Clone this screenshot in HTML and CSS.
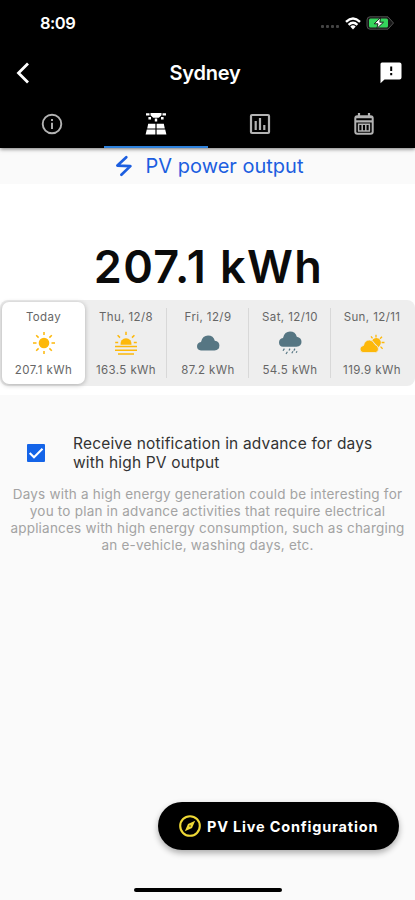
FILE: index.html
```html
<!DOCTYPE html>
<html lang="en">
<head>
<meta charset="utf-8">
<title>Sydney</title>
<link rel="stylesheet" href="styles.css">
</head>
<body>
<div class="screen">
  <header class="header">
    <div class="status">
      <span class="time">8:09</span>
      <div class="indicators">
        <span class="signal"><i></i><i></i><i></i><i></i></span>
        <svg class="wifi" width="16" height="13" viewBox="0 0 16 13" fill="none" stroke="#fff" stroke-width="2.4"><path d="M1 4.8Q8-1.6 15 4.8M3.6 7.8Q8 3.8 12.4 7.8"/><path d="M5.3 9.5Q8 7.2 10.7 9.5L8 12.4Z" fill="#fff" stroke="none"/></svg>
        <svg width="29" height="14" viewBox="0 0 29 14"><path d="M4 .8H22L27.5 7 22 13.2H4Q1 13.2 1 10V4Q1 .8 4 .8Z" fill="#171717" stroke="#505050"/><rect x="3" y="2.5" width="19" height="9" rx="1.5" fill="#35d45c"/><path d="M14.6 1.5 8.2 7.8H12L10.8 12.5 17.5 6.2H13.8Z" fill="#fff" stroke="#111" stroke-width=".9"/></svg>
      </div>
    </div>
    <div class="bar">
      <svg class="back" width="14" height="22" viewBox="0 0 14 22" fill="none" stroke="#fff" stroke-width="2.8"><path d="M12 1.5 2.5 11 12 20.5"/></svg>
      <h1>Sydney</h1>
      <svg class="feedback" width="22" height="22" viewBox="0 0 22 22"><path d="M2 .5H19.5Q21.5.5 21.5 2.5V15.5Q21.5 17.5 19.5 17.5H4.5L.5 21.3V2Q.5.5 2 .5Z" fill="#fff"/><path d="M11.2 4.5V9M11.2 11V13.2" stroke="#000" stroke-width="2"/></svg>
    </div>
    <nav class="tabs">
      <div class="tab">
        <svg width="22" height="22" viewBox="0 0 22 22" fill="none" stroke="#b3b3b3" stroke-width="1.9"><circle cx="11" cy="11" r="9.3"/><path d="M11 9.8V16M11 6V8.1"/></svg>
      </div>
      <div class="tab active">
        <svg width="22" height="22" viewBox="0 0 22 22" fill="#fff"><path d="M5.5 0H16.5V2.2L13.8 4.8H8.2L5.5 2.2ZM1 .3H4.5V2.4H1ZM17.5.3H21V2.4H17.5ZM3.4 4H6V6.4H3.4ZM16 4H18.6V6.4H16ZM9.8 5.6H12.2V8.6H9.8ZM3.2 10.8H10.4V15.4H2.2ZM11.6 10.8H18.8L19.8 15.4H11.6ZM1.8 16.6H10.4V21.4H.6ZM11.6 16.6H20.2L21.4 21.4H11.6Z"/></svg>
      </div>
      <div class="tab">
        <svg width="22" height="22" viewBox="0 0 22 22" fill="none" stroke="#b3b3b3" stroke-width="2.2"><rect x="2" y="2" width="18" height="18" rx="1"/><path d="M6.7 8V17M11 5V17M15.3 12V17"/></svg>
      </div>
      <div class="tab">
        <svg width="22" height="22" viewBox="0 0 22 22" fill="none" stroke="#b3b3b3" stroke-width="2"><rect x="2.3" y="3.2" width="17.4" height="17.6" rx="2"/><path d="M6 0V4M16 0V4M2 4.2H20M2 8.4H20" stroke-width="2.2"/><path d="M5.6 10.5V18.5M9.2 10.5V18.5M12.8 10.5V18.5M16.4 10.5V18.5M5 11.2H17M5 18H17" stroke-width="1.5"/></svg>
      </div>
    </nav>
  </header>
  <div class="heading">
    <svg width="18" height="22" viewBox="0 0 18 22" fill="none" stroke="#1c5ee0" stroke-width="2.7" stroke-linejoin="round" stroke-linecap="round"><path d="M11.3 2.2 2.4 10.6 15.4 11.1 6.4 19.8"/></svg>
    <h2>PV power output</h2>
  </div>
  <section class="output">
    <div class="total">207.1 kWh</div>
    <div class="days">
      <div class="day selected">
        <span>Today</span>
        <svg width="26" height="24" viewBox="0 0 26 24"><circle cx="13" cy="12" r="5.3" fill="#fdb80a"/><path d="M13 1V4M13 20V23M2 12H5.5M20.5 12H24M5.2 4.2 7.6 6.6M18.4 17.4 20.8 19.8M5.2 19.8 7.6 17.4M18.4 6.6 20.8 4.2" stroke="#fdb80a" stroke-width="1.5"/></svg>
        <span class="kwh">207.1 kWh</span>
      </div>
      <div class="day">
        <span>Thu, 12/8</span>
        <svg width="26" height="24" viewBox="0 0 26 24"><path d="M7.5 13.8A5.6 5.6 0 1 1 18.5 13.8Z" fill="#fdb80a"/><path d="M13 .8V4M4.6 4.2 7 6.6M21.4 4.2 19 6.6M2.2 11.5H5.2M20.8 11.5H23.8M2 15.6H24M2 19.3H24M5 23H21" stroke="#fdb80a" stroke-width="1.5"/></svg>
        <span class="kwh">163.5 kWh</span>
      </div>
      <div class="day">
        <span>Fri, 12/9</span>
        <svg width="26" height="24" viewBox="0 0 26 24"><path d="M6 19.5Q2 19.1 2 15.3 2 11.5 6 10.9 7.7 4.5 13 4.5 18.5 4.5 19.8 9.8 24.4 10.5 24.4 14.5 24.4 19 19.5 19.5Z" fill="#567683"/></svg>
        <span class="kwh">87.2 kWh</span>
      </div>
      <div class="day">
        <span>Sat, 12/10</span>
        <svg width="26" height="24" viewBox="0 0 26 24"><path d="M6 15.7Q2 15.3 2 11.4 2 7.5 6 6.9 7.7.5 13 .5 18.5.5 19.8 5.8 24.5 6.7 24.5 11 24.5 15.2 19.5 15.7Z" fill="#567683"/><path d="M7.4 17.6 6 19.8M13 17.6 12 19.5M18 17.6 16.8 19.6M10.4 20.8 9 23M16 20.3 14.8 22.2M20 20.3 19.2 21.8" stroke="#567683" stroke-width="1.2"/></svg>
        <span class="kwh">54.5 kWh</span>
      </div>
      <div class="day">
        <span>Sun, 12/11</span>
        <svg width="26" height="24" viewBox="0 0 26 24"><path d="M13.2 9.4A4.6 4.6 0 0 1 21.3 13.8L19.6 16.3Z" fill="#fdb80a"/><path d="M17 3.8V6.4M12 5.3 13.5 7.3M23 5.8 21 7.8M22.6 11.5H25.5M21.5 15.6 23.6 17.8" stroke="#fdb80a" stroke-width="1.3"/><path d="M4 21.6Q1 21 1 18 1 15 4.5 14.5 5.7 9 10.5 9 14 9 16 13.5 19.5 15 19.5 18 19.5 21 16.5 21.6Z" fill="#fdb80a" stroke="#eee" stroke-width=".8"/></svg>
        <span class="kwh">119.9 kWh</span>
      </div>
    </div>
  </section>
  <section class="notify">
    <label class="option">
      <svg width="18" height="18" viewBox="0 0 18 18"><rect width="18" height="18" rx="1" fill="#1464e8"/><path d="M2.7 8.9 7 13.2 15.5 4.7" fill="none" stroke="#fff" stroke-width="2.1"/></svg>
      <span>Receive notification in advance for days<br>with high PV output</span>
    </label>
    <p>Days with a high energy generation could be interesting for<br>you to plan in advance activities that require electrical<br>appliances with high energy consumption, such as charging<br>an e-vehicle, washing days, etc.</p>
  </section>
  <footer class="footer">
    <button class="fab">
      <svg width="22" height="22" viewBox="0 0 22 22"><circle cx="11" cy="11" r="9.8" fill="none" stroke="#efd936" stroke-width="2.1"/><path d="M16.2 5.8 13 13 5.8 16.2 9 9Z" fill="#efd936"/><circle cx="11" cy="11" r=".7" fill="#000"/></svg>
      <span>PV Live Configuration</span>
    </button>
    <div class="home"></div>
  </footer>
</div>
</body>
</html>
```
FILE: styles.css
```css
* { box-sizing: border-box; }
body { margin: 0; background: #fafafa; font-family: Inter, "Liberation Sans", sans-serif; }
h1, h2, p { margin: 0; }
svg { display: block; flex: none; }
.screen { width: 415px; height: 900px; display: flex; flex-direction: column; overflow: hidden; white-space: nowrap; }
.header { height: 148px; flex: none; background: #000; color: #fff; box-shadow: 0 1px 4px rgba(0,0,0,.55); z-index: 1; }
.status { height: 46px; padding: 0 20px 0 40px; display: flex; align-items: center; justify-content: space-between; }
.time { font-size: 16.5px; font-weight: 600; letter-spacing: -.5px; }
.indicators { display: flex; align-items: center; }
.signal { display: flex; gap: 2px; margin: 7px 6px 0 0; }
.signal i { width: 3px; height: 3px; border-radius: 1px; background: #444; }
.wifi { margin-right: 5px; }
.bar { height: 54px; padding: 0 13px 0 16px; display: grid; grid-template-columns: 22px 1fr 22px; align-items: center; }
.bar h1 { padding-right: 8px; text-align: center; font-size: 20px; font-weight: 600; letter-spacing: -.2px; }
.tabs { height: 48px; display: grid; grid-template-columns: repeat(4, 1fr); }
.tab { display: grid; place-items: center; padding: 2px 0 0 1px; border-bottom: 2px solid transparent; }
.tab.active { border-bottom-color: #2f82dc; }
.heading { height: 36px; flex: none; display: flex; align-items: center; justify-content: center; gap: 13px; padding-left: 3px; color: #1c5ee0; }
.heading h2 { font-size: 20px; font-weight: 400; letter-spacing: 0; }
.output { height: 211px; flex: none; background: #fff; padding: 55px 0 9px; }
.total { height: 61px; line-height: 56px; padding-left: 2px; text-align: center; font-size: 45px; font-weight: 600; letter-spacing: 1.4px; color: #0b0b0b; }
.days { height: 86px; display: grid; grid-template-columns: 86px repeat(4, 1fr); padding-right: 1px; background: #eee; border-radius: 8px; }
.day { position: relative; display: flex; flex-direction: column; align-items: center; padding: 9px 2px 0 0; font-size: 11.5px; line-height: 16px; letter-spacing: .4px; color: #666; }
.day svg { margin: 6px 0 7px; }
.day + .day + .day::before { content: ""; position: absolute; left: -2px; top: 8px; height: 70px; width: 1px; background: #d8d8d8; }
.day.selected { margin: 2px 1px 2px 2px; padding: 7px 0 0; background: #fff; border-radius: 7px; box-shadow: 0 1px 5px rgba(0,0,0,.28); }
.notify { flex: 1; padding-top: 39px; }
.option { display: flex; align-items: center; gap: 28px; padding-left: 27px; font-size: 15.5px; line-height: 19px; letter-spacing: .18px; color: #333; }
.notify p { margin-top: 14px; text-align: center; font-size: 13.5px; line-height: 17px; letter-spacing: .21px; color: #a3a3a3; }
.footer { height: 98px; flex: none; display: flex; flex-direction: column; }
.fab { align-self: flex-end; width: 241px; height: 48px; margin-right: 16px; padding: 0 0 0 21px; display: flex; align-items: center; gap: 6px; border: 0; border-radius: 24px; background: #000; color: #fff; font: 700 14.5px Inter, sans-serif; letter-spacing: .81px; box-shadow: 0 3px 6px rgba(0,0,0,.32); }
.home { width: 148px; height: 4px; margin: 38px 0 0 134px; border-radius: 2px; background: #000; }
```
